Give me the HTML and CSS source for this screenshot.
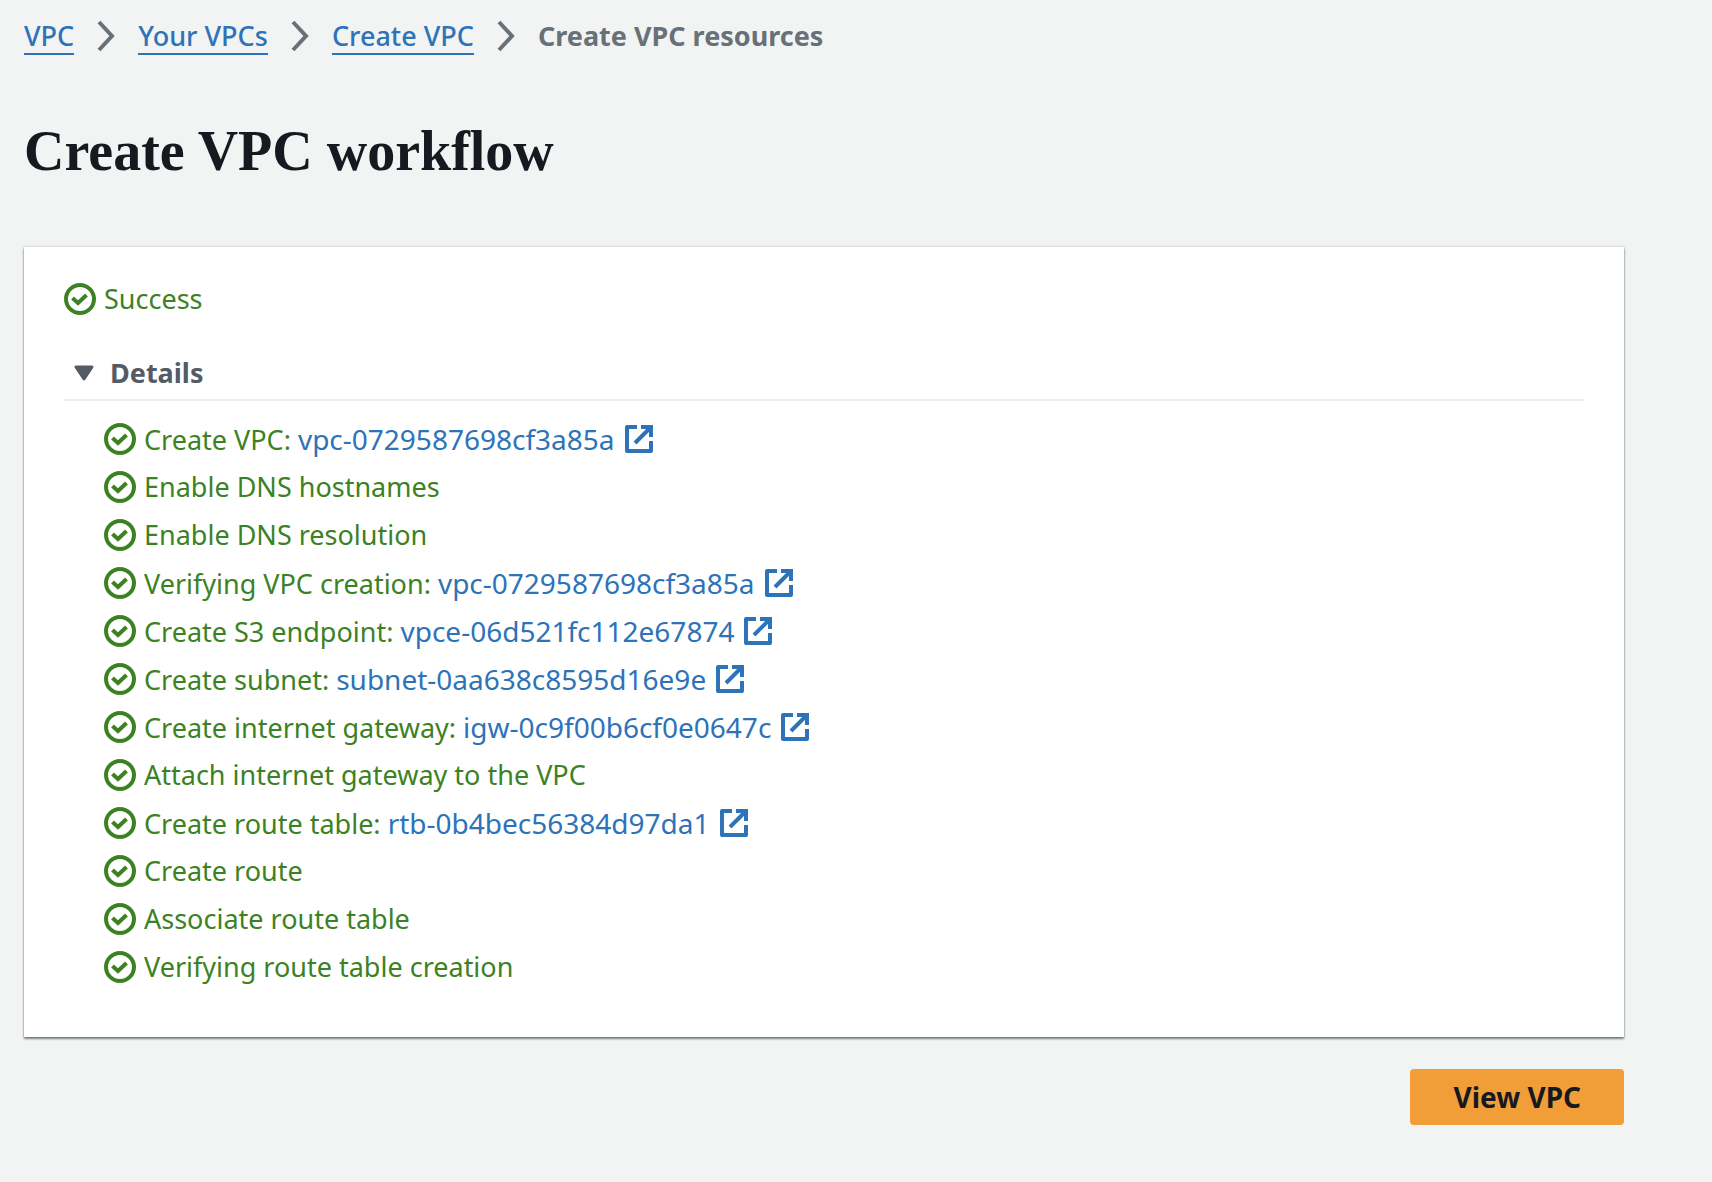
FILE: index.html
```html
<!DOCTYPE html>
<html lang="en">
<head>
<meta charset="utf-8">
<meta name="viewport" content="width=device-width, initial-scale=1">
<title>Create VPC workflow</title>
<link rel="stylesheet" href="styles.css">
</head>
<body>
<svg class="sprite" aria-hidden="true">
  <symbol id="check" viewBox="0 0 32 32">
    <circle cx="16" cy="16" r="14"/>
    <path d="M8.500 15l5.500 5 8.500-8"/>
  </symbol>
  <symbol id="external" viewBox="0 0 32 32">
    <path d="M14 4H4v24h24V18" stroke-linejoin="round"/>
    <path d="M18 4h10v10M27 5L12 20"/>
  </symbol>
  <symbol id="chevron" viewBox="0 0 18 32">
    <path d="M2 2l13 14-13 14"/>
  </symbol>
</svg>
<nav aria-label="Breadcrumbs">
  <ol class="breadcrumbs">
    <li><a href="#vpc">VPC</a><svg class="chevron"><use href="#chevron"/></svg></li>
    <li><a href="#vpcs">Your VPCs</a><svg class="chevron"><use href="#chevron"/></svg></li>
    <li><a href="#create">Create VPC</a><svg class="chevron"><use href="#chevron"/></svg></li>
    <li class="current" aria-current="page">Create VPC resources</li>
  </ol>
</nav>
<main>
  <h1>Create VPC workflow</h1>
  <section class="card">
    <p class="status"><svg class="icon"><use href="#check"/></svg>Success</p>
    <details open>
      <summary><svg class="caret" viewBox="0 0 20 16"><path d="M2 2h16l-8 12z"/></svg>Details</summary>
      <ul class="steps">
        <li><svg class="icon"><use href="#check"/></svg><span>Create VPC: <a href="#vpc-id">vpc-0729587698cf3a85a</a></span><svg class="icon external"><use href="#external"/></svg></li>
        <li><svg class="icon"><use href="#check"/></svg>Enable DNS hostnames</li>
        <li><svg class="icon"><use href="#check"/></svg>Enable DNS resolution</li>
        <li><svg class="icon"><use href="#check"/></svg><span>Verifying VPC creation: <a href="#vpc-id">vpc-0729587698cf3a85a</a></span><svg class="icon external"><use href="#external"/></svg></li>
        <li><svg class="icon"><use href="#check"/></svg><span>Create S3 endpoint: <a href="#vpce">vpce-06d521fc112e67874</a></span><svg class="icon external"><use href="#external"/></svg></li>
        <li><svg class="icon"><use href="#check"/></svg><span>Create subnet: <a href="#subnet">subnet-0aa638c8595d16e9e</a></span><svg class="icon external"><use href="#external"/></svg></li>
        <li><svg class="icon"><use href="#check"/></svg><span>Create internet gateway: <a href="#igw">igw-0c9f00b6cf0e0647c</a></span><svg class="icon external"><use href="#external"/></svg></li>
        <li><svg class="icon"><use href="#check"/></svg>Attach internet gateway to the VPC</li>
        <li><svg class="icon"><use href="#check"/></svg><span>Create route table: <a href="#rtb">rtb-0b4bec56384d97da1</a></span><svg class="icon external"><use href="#external"/></svg></li>
        <li><svg class="icon"><use href="#check"/></svg>Create route</li>
        <li><svg class="icon"><use href="#check"/></svg>Associate route table</li>
        <li><svg class="icon"><use href="#check"/></svg>Verifying route table creation</li>
      </ul>
    </details>
  </section>
  <div class="actions"><button type="button">View VPC</button></div>
</main>
</body>
</html>
```
FILE: styles.css
```css
* { box-sizing: border-box; }

body {
  margin: 0;
  padding: 16px 88px 56px 24px;
  background: #f2f4f3;
  color: #16191f;
  font: 27px/40px "Noto Sans", sans-serif;
}

.sprite { display: none; }

ol, ul, p, h1 { margin: 0; padding: 0; list-style: none; }

a { color: #2e73b8; font-size: 28px; text-decoration: none; }

.breadcrumbs,
.breadcrumbs li { display: flex; align-items: center; }

.breadcrumbs a {
  padding-top: 2px;
  border-bottom: 2px solid;
  font-size: 27px;
  font-weight: 500;
  line-height: 34px;
}

.breadcrumbs .current { color: #687078; font-weight: 700; }

.chevron {
  width: 18px;
  height: 32px;
  margin: 0 23px;
  fill: none;
  stroke: #687078;
  stroke-width: 4;
}

h1 {
  padding: 63px 0 64px;
  font: 700 56px/64px "Liberation Serif", serif;
}

.card {
  padding: 32px 40px 46px;
  background: #fff;
  box-shadow: 0 2px 2px rgba(0, 28, 36, 0.5), 0 0 2px rgba(0, 28, 36, 0.3);
}

.status,
.steps li { display: flex; align-items: center; color: #3c8224; }

.icon {
  flex: none;
  width: 32px;
  height: 32px;
  margin-right: 8px;
  fill: none;
  stroke: #3c8224;
  stroke-width: 4;
}

.external { margin: 0 0 0 8px; stroke: #2e73b8; }

summary {
  display: flex;
  align-items: center;
  gap: 16px;
  margin-top: 34px;
  padding: 0 10px 6px;
  border-bottom: 2px solid #eaeded;
  color: #545b64;
  font-weight: 700;
  cursor: pointer;
}

.caret {
  width: 20px;
  height: 16px;
  fill: #545b64;
  stroke: #545b64;
  stroke-width: 3;
  stroke-linejoin: round;
}

.steps { padding: 14px 0 0 40px; }

.steps li { height: 48px; }

.actions { display: flex; justify-content: flex-end; margin-top: 32px; }

button {
  padding: 8px 43px;
  border: 0;
  border-radius: 4px;
  background: #f19e38;
  color: #16191f;
  font: inherit;
  font-size: 28px;
  font-weight: 700;
  cursor: pointer;
}
```
